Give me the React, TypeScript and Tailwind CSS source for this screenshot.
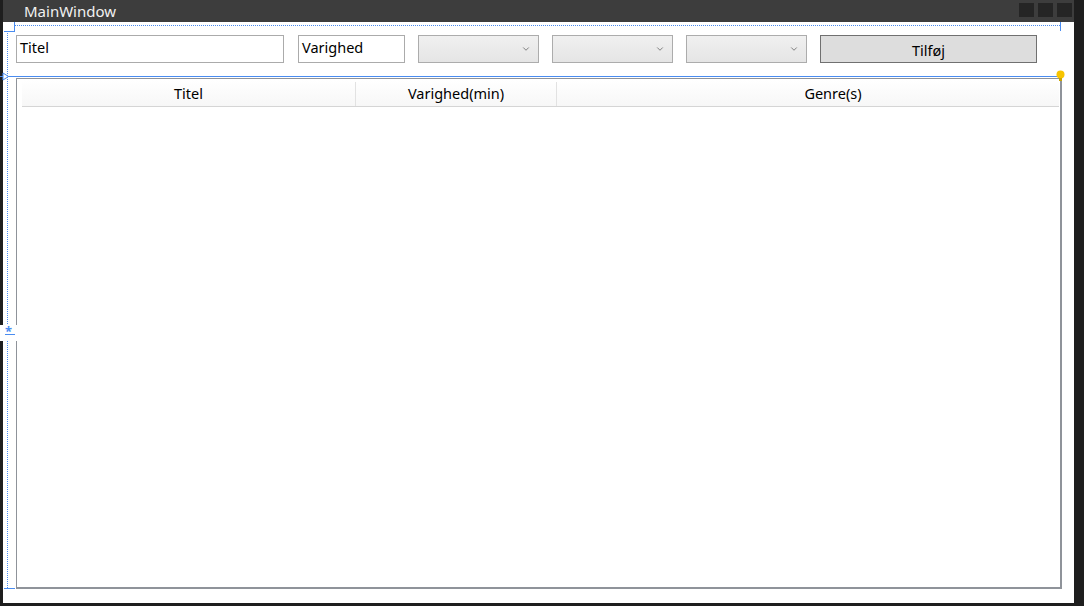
import { ChevronDown } from 'lucide-react'

const font = { fontFamily: '"Noto Sans", "Open Sans", sans-serif' }

function TextBox({ value, width }: { value: string; width: string }) {
  return (
    <div className={`${width} h-[28px] border border-[#ababab] bg-white pt-[1px] px-[3px] text-[14.5px] leading-[20px] text-black`}>
      {value}
    </div>
  )
}

function ComboBox() {
  return (
    <div className="w-[121px] h-[28px] border border-[#acacac] bg-gradient-to-b from-[#f0f0f0] to-[#e5e5e5] flex items-center justify-end pr-[7px]">
      <ChevronDown className="w-[10px] h-[10px] text-[#6a6a6a]" strokeWidth={2} />
    </div>
  )
}

export default function App() {
  return (
    <div className="relative w-[1084px] h-[606px] bg-[#1e1e1e] overflow-hidden" style={font}>
      {/* window */}
      <div className="ml-[3px] w-[1071px] h-[603px] bg-white flex flex-col">
        <div className="h-[22px] bg-[#3d3d3d] flex items-center pl-[21px] pr-[2px]">
          <span className="text-[15px] text-[#f1f1f1] leading-none">MainWindow</span>
          <div className="ml-auto flex gap-[4px] self-start mt-[3px]">
            <div className="w-[15px] h-[14px] bg-[#252525]" />
            <div className="w-[15px] h-[14px] bg-[#252525]" />
            <div className="w-[15px] h-[14px] bg-[#252525]" />
          </div>
        </div>

        {/* toolbar */}
        <div className="flex items-center pl-[13px] mt-[13px]">
          <TextBox value="Titel" width="w-[268px]" />
          <div className="ml-[14px]">
            <TextBox value="Varighed" width="w-[107px]" />
          </div>
          <div className="ml-[13px] flex gap-[13px]">
            <ComboBox />
            <ComboBox />
            <ComboBox />
          </div>
          <button className="ml-[13px] w-[217px] h-[28px] bg-[#dddddd] border border-[#707070] pt-[3px] text-[14.5px] text-black flex items-center justify-center">
            Tilføj
          </button>
        </div>

        {/* data grid */}
        <div className="ml-[13px] mt-[15px] w-[1046px] h-[511px] border border-[#8f939a] border-b-2 border-r-2 pt-[1px] pl-[5px] pr-[1px]">
          <div className="flex h-[27px] pt-[2px] border-b border-[#d5d5d5] bg-gradient-to-b from-white to-[#f7f7f7] text-[14.5px] text-black">
            <div className="w-[334px] flex items-center justify-center border-r border-[#e2e2e2]">Titel</div>
            <div className="w-[201px] flex items-center justify-center border-r border-[#e2e2e2]">Varighed(min)</div>
            <div className="flex-1 flex items-center justify-center pl-[50px]">Genre(s)</div>
          </div>
        </div>
      </div>

      {/* designer adorners */}
      <div className="absolute left-[14px] top-[25px] w-[1046px] border-t border-dotted border-[#4a8cf0]" />
      <div className="absolute left-[1060px] top-[22px] h-[9px] border-l border-[#4a8cf0]" />
      <div className="absolute left-[4px] top-[22px] w-[11px] h-[10px] border-r border-b border-[#4a8cf0]" />
      <div className="absolute left-[7px] top-[33px] h-[555px] border-l border-dotted border-[#4a8cf0]" />
      <div className="absolute left-0 top-[76px] w-[1060px] border-t border-[#4a8cf0]" />
      <svg className="absolute left-[2px] top-[72px]" width="8" height="9" viewBox="0 0 8 9">
        <path d="M1 1 L6.5 4.5 L1 8 Z" fill="white" stroke="#4a8cf0" strokeWidth="1" />
      </svg>
      <svg className="absolute left-[1056px] top-[70px]" width="9" height="12" viewBox="0 0 9 12">
        <circle cx="4.5" cy="4.5" r="4" fill="#f7c400" />
        <rect x="3" y="8" width="3" height="3" fill="#c9a400" />
      </svg>
      <div className="absolute left-[4px] top-[588px] w-[11px] border-t border-[#4a8cf0]" />
      <div className="absolute left-0 top-[325px] w-[17px] h-[16px] bg-white">
        <span className="absolute left-[5px] top-[1px] text-[13px] leading-[10px] text-[#4a8cf0] font-bold">*</span>
        <div className="absolute left-[5px] top-[9px] w-[10px] border-t border-[#4a8cf0]" />
      </div>
    </div>
  )
}
